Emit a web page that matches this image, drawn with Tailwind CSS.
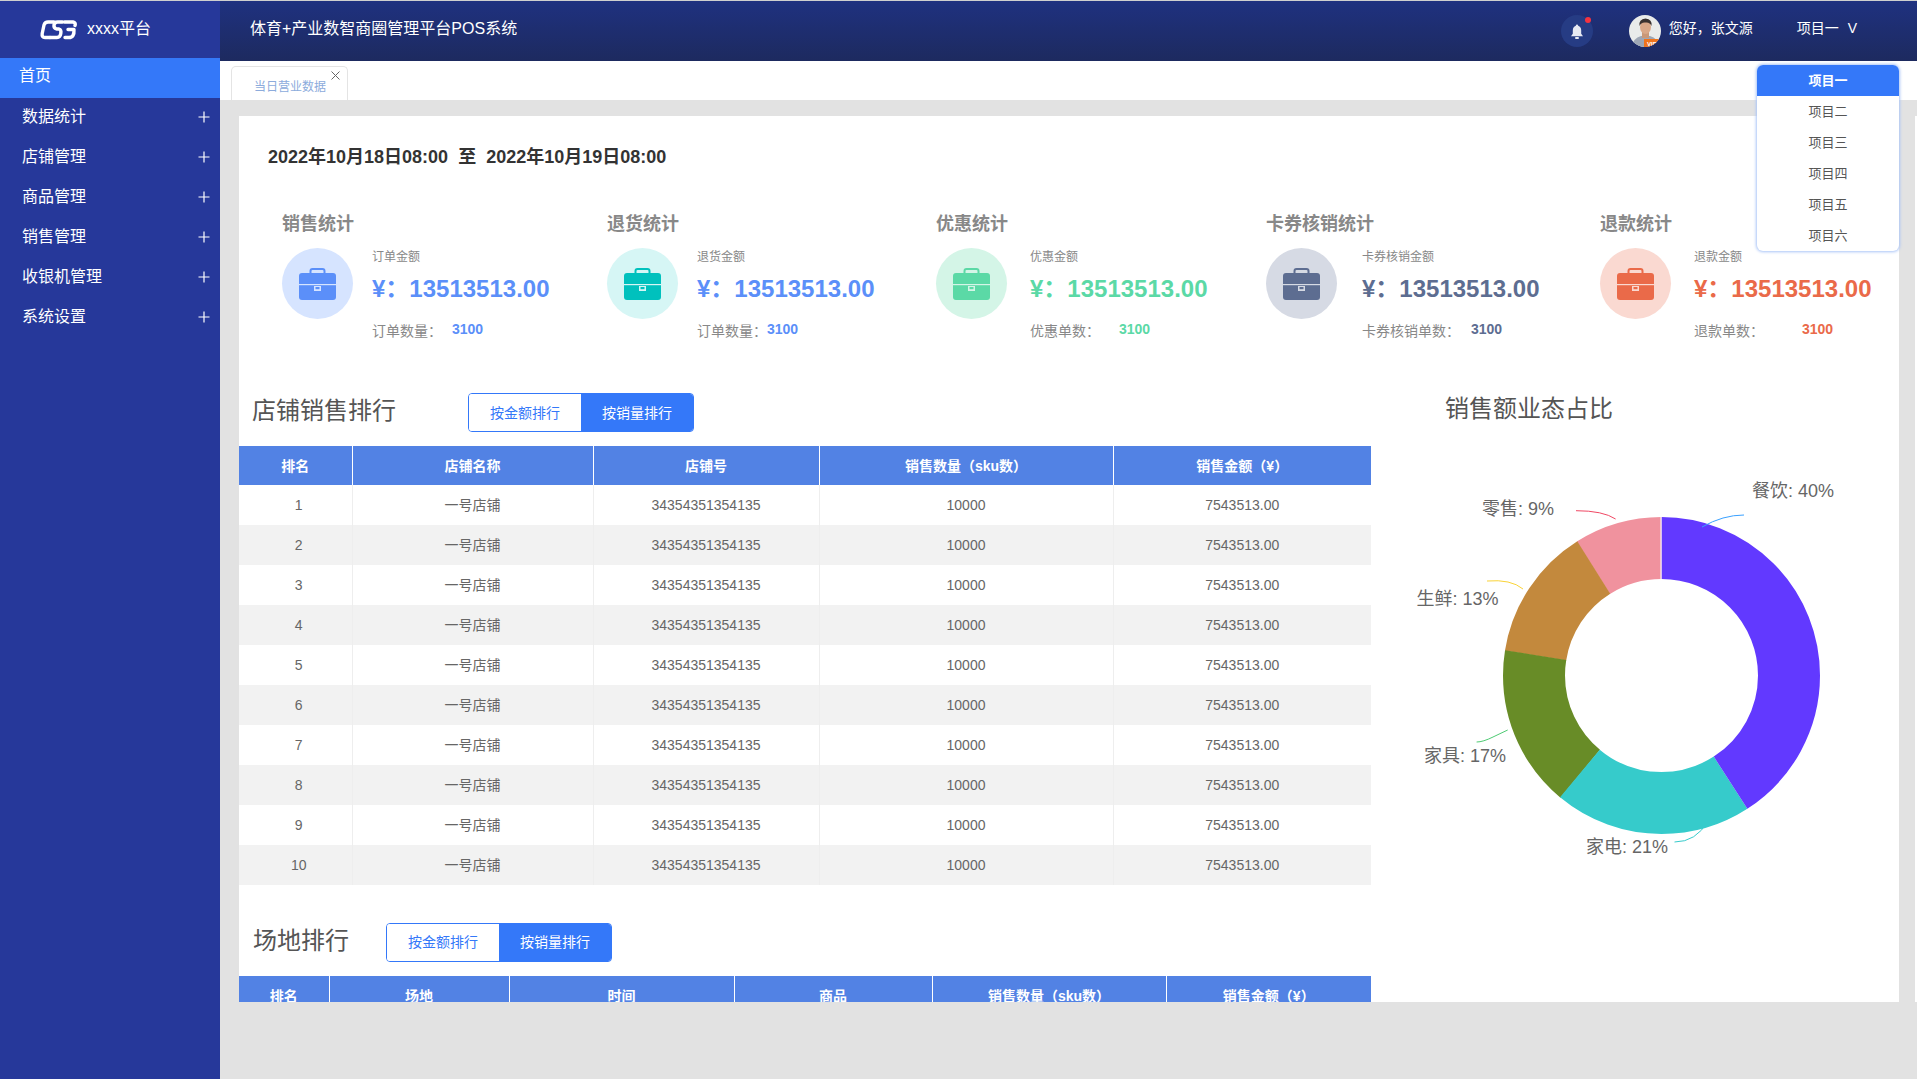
<!DOCTYPE html>
<html lang="zh">
<head>
    <meta charset="UTF-8">
    <title>体育+产业数智商圈管理平台POS系统</title>
    <script src="https://cdn.jsdelivr.net/npm/@tailwindcss/browser@4"></script>
</head>
<body class="font-['Liberation_Sans','Noto_Sans_CJK_SC',sans-serif] overflow-hidden">
<div class="relative flex flex-col h-screen border-t border-[#cfcfcf] bg-[#e2e2e2]">
    <div class="flex flex-1 min-h-0">
        <!-- 侧边栏 -->
        <aside class="w-[220px] shrink-0 bg-[#26389a] text-white">
            <div class="h-[57px] flex items-center pl-[40px] gap-[10px]">
                <svg width="37" height="20" viewBox="0 0 37 20" fill="none" stroke="white" stroke-width="3.4" stroke-linecap="round" stroke-linejoin="round">
                    <path d="M14 2 H8 Q5 2 4 5 L2.2 13.5 Q1.6 17.5 5 17.5 H10"/>
                    <path d="M22.5 2 H17.5 Q14.5 2 14 5 Q13.6 8 16.5 9 H19 Q21.5 9.8 20.8 13.5 Q20.2 17.5 17 17.5 H10"/>
                    <path d="M24.5 2 H33 Q36 2.5 35 5.5"/>
                    <path d="M28 9.5 H34 Q34.5 17.5 29 17.5 H25"/>
                </svg>
                <span class="text-[16px] pb-[2px]">xxxx平台</span>
            </div>
            <div class="h-[40px] bg-[#3478f9] flex items-center pl-[19px] pb-[4px] text-[16px]">首页</div>
            <nav class="text-[16px]">
                <div class="h-[40px] flex items-center justify-between pl-[22px] pr-[10px] pb-[3px]"><span>数据统计</span><svg width="12" height="12" viewBox="0 0 12 12" stroke="white" stroke-width="1.2"><path d="M6 0.5V11.5M0.5 6H11.5"/></svg></div>
                <div class="h-[40px] flex items-center justify-between pl-[22px] pr-[10px] pb-[3px]"><span>店铺管理</span><svg width="12" height="12" viewBox="0 0 12 12" stroke="white" stroke-width="1.2"><path d="M6 0.5V11.5M0.5 6H11.5"/></svg></div>
                <div class="h-[40px] flex items-center justify-between pl-[22px] pr-[10px] pb-[3px]"><span>商品管理</span><svg width="12" height="12" viewBox="0 0 12 12" stroke="white" stroke-width="1.2"><path d="M6 0.5V11.5M0.5 6H11.5"/></svg></div>
                <div class="h-[40px] flex items-center justify-between pl-[22px] pr-[10px] pb-[3px]"><span>销售管理</span><svg width="12" height="12" viewBox="0 0 12 12" stroke="white" stroke-width="1.2"><path d="M6 0.5V11.5M0.5 6H11.5"/></svg></div>
                <div class="h-[40px] flex items-center justify-between pl-[22px] pr-[10px] pb-[3px]"><span>收银机管理</span><svg width="12" height="12" viewBox="0 0 12 12" stroke="white" stroke-width="1.2"><path d="M6 0.5V11.5M0.5 6H11.5"/></svg></div>
                <div class="h-[40px] flex items-center justify-between pl-[22px] pr-[10px] pb-[3px]"><span>系统设置</span><svg width="12" height="12" viewBox="0 0 12 12" stroke="white" stroke-width="1.2"><path d="M6 0.5V11.5M0.5 6H11.5"/></svg></div>
            </nav>
        </aside>

        <div class="flex-1 min-w-0 flex flex-col">
            <!-- 顶部栏 -->
            <header class="h-[60px] shrink-0 bg-gradient-to-b from-[#1f3180] to-[#1d2a5f] flex items-center text-white pl-[30px] pb-[6px]">
                <span class="text-[16px] pt-[2px]">体育+产业数智商圈管理平台POS系统</span>
                <div class="relative ml-auto mt-[6px] w-[32px] h-[32px] rounded-full bg-[#263c84] flex items-center justify-center">
                    <svg width="12" height="15" viewBox="0 0 12 15" fill="#e6e9f2"><path d="M6 0.5 Q7 0.5 7.2 1.8 Q10.2 2.8 10.2 6.5 V9.8 L12 12.2 H0 L1.8 9.8 V6.5 Q1.8 2.8 4.8 1.8 Q5 0.5 6 0.5Z"/><rect x="4" y="13" width="4" height="2" rx="1"/></svg>
                    <span class="absolute right-[2px] top-[2px] w-[6px] h-[6px] rounded-full bg-[#f5333f]"></span>
                </div>
                <svg class="ml-[36px] mt-[6px]" width="32" height="32" viewBox="0 0 32 32">
                    <clipPath id="av"><circle cx="16" cy="16" r="16"/></clipPath>
                    <g clip-path="url(#av)">
                        <rect width="32" height="32" fill="#e9ebea"/>
                        <path d="M3 32 Q4 23 12 21 H21 Q29 23 30 32Z" fill="#9ea7b5"/>
                        <rect x="13" y="17" width="7" height="6" fill="#c99878"/>
                        <ellipse cx="16.5" cy="12" rx="5.5" ry="7" fill="#d9a888"/>
                        <path d="M10.5 11 Q9.5 4 16.5 3.5 Q23.5 4 22.5 11 Q21 7 16.5 7.5 Q12 7 10.5 11Z" fill="#3a3230"/>
                        <rect x="15" y="24" width="17" height="8" fill="#f0741c"/>
                        <text x="18" y="30.5" font-size="6" font-weight="700" fill="#fff">VIP</text>
                    </g>
                </svg>
                <span class="ml-[8px] text-[14px]">您好，张文源</span>
                <span class="ml-[44px] mr-[60px] text-[14px] flex">项目一<span class="ml-[9px]">V</span></span>
            </header>

            <!-- 标签栏 -->
            <div class="h-[39px] shrink-0 bg-white pl-[11px] pt-[5px]">
                <div class="relative w-[117px] h-[34px] border border-b-0 border-[#e4e4e4] rounded-t-[5px] text-[12px] text-[#8cabdc] pl-[22px] pt-[11px] leading-[18px]">
                    当日营业数据
                    <svg class="absolute right-[7px] top-[4px]" width="9" height="9" viewBox="0 0 9 9" stroke="#666" stroke-width="1"><path d="M0.5 0.5L8.5 8.5M8.5 0.5L0.5 8.5"/></svg>
                </div>
            </div>

            <!-- 内容区 -->
            <div class="flex-1 min-h-0 flex pl-[19px] pt-[16px]">
                <main class="w-[1660px] h-[886px] shrink-0 bg-white overflow-hidden">
                    <div class="h-[82px] flex items-center pl-[29px] text-[18px] font-bold text-[#333]">
                        <span>2022年10月18日08:00</span><span class="mx-[10px]">至</span><span>2022年10月19日08:00</span>
                    </div>

                    <!-- 统计 -->
                    <div class="h-[187px] flex pl-[43px] pt-[13px]">
                        <section class="w-[325px]">
                            <h3 class="text-[18px] leading-[26px] font-bold text-[#888]">销售统计</h3>
                            <div class="mt-[11px] flex">
                                <div class="w-[71px] h-[71px] shrink-0 rounded-full bg-[#d6e4ff] flex items-center justify-center">
                                    <svg width="37" height="32" viewBox="0 0 37 32" class="text-[#5b8ff9]"><rect x="11.5" y="1" width="14" height="6" rx="2" fill="none" stroke="currentColor" stroke-width="2"/><rect y="5" width="37" height="27" rx="3" fill="currentColor"/><rect y="16" width="37" height="1.2" fill="#d6e4ff"/><rect x="15" y="18" width="7" height="5" fill="#d6e4ff"/><rect x="16.5" y="19" width="4" height="2.2" fill="currentColor"/></svg>
                                </div>
                                <div class="ml-[19px] text-[#888]">
                                    <div class="text-[12px] leading-[18px]">订单金额</div>
                                    <div class="mt-[6px] h-[34px] leading-[34px] text-[24px] font-bold whitespace-nowrap text-[#5b8ff9]">¥：13513513.00</div>
                                    <div class="mt-[15px] flex items-center h-[20px] text-[14px]"><span class="w-[80px]">订单数量：</span><span class="-mt-[4px] font-bold text-[#5b8ff9]">3100</span></div>
                                </div>
                            </div>
                        </section>
                        <section class="w-[329px]">
                            <h3 class="text-[18px] leading-[26px] font-bold text-[#888]">退货统计</h3>
                            <div class="mt-[11px] flex">
                                <div class="w-[71px] h-[71px] shrink-0 rounded-full bg-[#d6f6f5] flex items-center justify-center">
                                    <svg width="37" height="32" viewBox="0 0 37 32" class="text-[#00c1bd]"><rect x="11.5" y="1" width="14" height="6" rx="2" fill="none" stroke="currentColor" stroke-width="2"/><rect y="5" width="37" height="27" rx="3" fill="currentColor"/><rect y="16" width="37" height="1.2" fill="#d6f6f5"/><rect x="15" y="18" width="7" height="5" fill="#d6f6f5"/><rect x="16.5" y="19" width="4" height="2.2" fill="currentColor"/></svg>
                                </div>
                                <div class="ml-[19px] text-[#888]">
                                    <div class="text-[12px] leading-[18px]">退货金额</div>
                                    <div class="mt-[6px] h-[34px] leading-[34px] text-[24px] font-bold whitespace-nowrap text-[#5b8ff9]">¥：13513513.00</div>
                                    <div class="mt-[15px] flex items-center h-[20px] text-[14px]"><span class="w-[70px]">订单数量：</span><span class="-mt-[4px] font-bold text-[#5b8ff9]">3100</span></div>
                                </div>
                            </div>
                        </section>
                        <section class="w-[330px]">
                            <h3 class="text-[18px] leading-[26px] font-bold text-[#888]">优惠统计</h3>
                            <div class="mt-[11px] flex">
                                <div class="w-[71px] h-[71px] shrink-0 rounded-full bg-[#d4f5e7] flex items-center justify-center">
                                    <svg width="37" height="32" viewBox="0 0 37 32" class="text-[#5bd9a6]"><rect x="11.5" y="1" width="14" height="6" rx="2" fill="none" stroke="currentColor" stroke-width="2"/><rect y="5" width="37" height="27" rx="3" fill="currentColor"/><rect y="16" width="37" height="1.2" fill="#d4f5e7"/><rect x="15" y="18" width="7" height="5" fill="#d4f5e7"/><rect x="16.5" y="19" width="4" height="2.2" fill="currentColor"/></svg>
                                </div>
                                <div class="ml-[23px] text-[#888]">
                                    <div class="text-[12px] leading-[18px]">优惠金额</div>
                                    <div class="mt-[6px] h-[34px] leading-[34px] text-[24px] font-bold whitespace-nowrap text-[#5bd9a6]">¥：13513513.00</div>
                                    <div class="mt-[15px] flex items-center h-[20px] text-[14px]"><span class="w-[89px]">优惠单数：</span><span class="-mt-[4px] font-bold text-[#5bd9a6]">3100</span></div>
                                </div>
                            </div>
                        </section>
                        <section class="w-[334px]">
                            <h3 class="text-[18px] leading-[26px] font-bold text-[#888]">卡券核销统计</h3>
                            <div class="mt-[11px] flex">
                                <div class="w-[71px] h-[71px] shrink-0 rounded-full bg-[#d6dae4] flex items-center justify-center">
                                    <svg width="37" height="32" viewBox="0 0 37 32" class="text-[#5d6d91]"><rect x="11.5" y="1" width="14" height="6" rx="2" fill="none" stroke="currentColor" stroke-width="2"/><rect y="5" width="37" height="27" rx="3" fill="currentColor"/><rect y="16" width="37" height="1.2" fill="#d6dae4"/><rect x="15" y="18" width="7" height="5" fill="#d6dae4"/><rect x="16.5" y="19" width="4" height="2.2" fill="currentColor"/></svg>
                                </div>
                                <div class="ml-[25px] text-[#888]">
                                    <div class="text-[12px] leading-[18px]">卡券核销金额</div>
                                    <div class="mt-[6px] h-[34px] leading-[34px] text-[24px] font-bold whitespace-nowrap text-[#5d6d91]">¥：13513513.00</div>
                                    <div class="mt-[15px] flex items-center h-[20px] text-[14px]"><span class="w-[109px]">卡券核销单数：</span><span class="-mt-[4px] font-bold text-[#5d6d91]">3100</span></div>
                                </div>
                            </div>
                        </section>
                        <section class="flex-1">
                            <h3 class="text-[18px] leading-[26px] font-bold text-[#888]">退款统计</h3>
                            <div class="mt-[11px] flex">
                                <div class="w-[71px] h-[71px] shrink-0 rounded-full bg-[#fad9d1] flex items-center justify-center">
                                    <svg width="37" height="32" viewBox="0 0 37 32" class="text-[#ea6a49]"><rect x="11.5" y="1" width="14" height="6" rx="2" fill="none" stroke="currentColor" stroke-width="2"/><rect y="5" width="37" height="27" rx="3" fill="currentColor"/><rect y="16" width="37" height="1.2" fill="#fad9d1"/><rect x="15" y="18" width="7" height="5" fill="#fad9d1"/><rect x="16.5" y="19" width="4" height="2.2" fill="currentColor"/></svg>
                                </div>
                                <div class="ml-[23px] text-[#888]">
                                    <div class="text-[12px] leading-[18px]">退款金额</div>
                                    <div class="mt-[6px] h-[34px] leading-[34px] text-[24px] font-bold whitespace-nowrap text-[#ea6a49]">¥：13513513.00</div>
                                    <div class="mt-[15px] flex items-center h-[20px] text-[14px]"><span class="w-[108px]">退款单数：</span><span class="-mt-[4px] font-bold text-[#ea6a49]">3100</span></div>
                                </div>
                            </div>
                        </section>
                    </div>

                    <div class="flex">
                        <div class="w-[1132px] shrink-0">
                            <!-- 店铺销售排行 -->
                            <div class="h-[61px] flex pt-[8px]">
                                <h2 class="w-[229px] pl-[13px] text-[24px] leading-[36px] text-[#555]">店铺销售排行</h2>
                                <div class="flex w-[226px] h-[39px] rounded-[4px] border border-[#3478f9] overflow-hidden text-[14px]">
                                    <span class="w-[112px] flex items-center justify-center pt-[2px] text-[#3478f9] bg-white">按金额排行</span>
                                    <span class="flex-1 flex items-center justify-center pt-[2px] text-white bg-[#3478f9]">按销量排行</span>
                                </div>
                            </div>
                            <table class="w-[1132px] table-fixed border-collapse text-[14px] text-[#666] text-center">
                                <thead>
                                    <tr class="h-[39px] bg-[#5282e4] text-white font-bold [&_th]:pt-[2px]">
                                        <th class="w-[113px] border-r border-white">排名</th>
                                        <th class="w-[241px] border-r border-white">店铺名称</th>
                                        <th class="w-[226px] border-r border-white">店铺号</th>
                                        <th class="w-[294px] border-r border-white">销售数量（sku数）</th>
                                        <th>销售金额（¥）</th>
                                    </tr>
                                </thead>
                                <tbody class="[&_td]:border-r [&_td]:border-[#eeeeee] [&_td:last-child]:border-r-0 [&_td]:pt-[1px] [&_td:first-child]:pl-[7px]">
                                    <tr class="h-[40px]"><td>1</td><td>一号店铺</td><td>34354351354135</td><td>10000</td><td>7543513.00</td></tr>
                                    <tr class="h-[40px] bg-[#f2f2f2]"><td>2</td><td>一号店铺</td><td>34354351354135</td><td>10000</td><td>7543513.00</td></tr>
                                    <tr class="h-[40px]"><td>3</td><td>一号店铺</td><td>34354351354135</td><td>10000</td><td>7543513.00</td></tr>
                                    <tr class="h-[40px] bg-[#f2f2f2]"><td>4</td><td>一号店铺</td><td>34354351354135</td><td>10000</td><td>7543513.00</td></tr>
                                    <tr class="h-[40px]"><td>5</td><td>一号店铺</td><td>34354351354135</td><td>10000</td><td>7543513.00</td></tr>
                                    <tr class="h-[40px] bg-[#f2f2f2]"><td>6</td><td>一号店铺</td><td>34354351354135</td><td>10000</td><td>7543513.00</td></tr>
                                    <tr class="h-[40px]"><td>7</td><td>一号店铺</td><td>34354351354135</td><td>10000</td><td>7543513.00</td></tr>
                                    <tr class="h-[40px] bg-[#f2f2f2]"><td>8</td><td>一号店铺</td><td>34354351354135</td><td>10000</td><td>7543513.00</td></tr>
                                    <tr class="h-[40px]"><td>9</td><td>一号店铺</td><td>34354351354135</td><td>10000</td><td>7543513.00</td></tr>
                                    <tr class="h-[40px] bg-[#f2f2f2]"><td>10</td><td>一号店铺</td><td>34354351354135</td><td>10000</td><td>7543513.00</td></tr>
                                </tbody>
                            </table>

                            <!-- 场地排行 -->
                            <div class="h-[91px] flex pt-[38px]">
                                <h2 class="w-[147px] pl-[14px] text-[24px] leading-[36px] text-[#555]">场地排行</h2>
                                <div class="flex w-[226px] h-[39px] rounded-[4px] border border-[#3478f9] overflow-hidden text-[14px]">
                                    <span class="w-[112px] flex items-center justify-center text-[#3478f9] bg-white">按金额排行</span>
                                    <span class="flex-1 flex items-center justify-center text-white bg-[#3478f9]">按销量排行</span>
                                </div>
                            </div>
                            <table class="w-[1132px] table-fixed border-collapse text-[14px] text-center">
                                <thead>
                                    <tr class="h-[39px] bg-[#5282e4] text-white font-bold [&_th]:pt-[2px]">
                                        <th class="w-[90px] border-r border-white">排名</th>
                                        <th class="w-[180px] border-r border-white">场地</th>
                                        <th class="w-[225px] border-r border-white">时间</th>
                                        <th class="w-[198px] border-r border-white">商品</th>
                                        <th class="w-[234px] border-r border-white">销售数量（sku数）</th>
                                        <th>销售金额（¥）</th>
                                    </tr>
                                </thead>
                            </table>
                        </div>

                        <!-- 环形图 -->
                        <div class="flex-1">
                            <h2 class="h-[46px] pl-[74px] text-[24px] leading-[48px] text-[#555]">销售额业态占比</h2>
                            <svg width="528" height="455" viewBox="0 0 528 455" fill="none">
                                <g stroke-width="62" transform="rotate(-90 290.5 244.5)">
                                    <circle cx="290.5" cy="244.5" r="127.5" pathLength="360" stroke="#f0929e" stroke-dasharray="32.3 360" stroke-dashoffset="-327.7"/>
                                    <circle cx="290.5" cy="244.5" r="127.5" pathLength="360" stroke="#c3893d" stroke-dasharray="48.9 360" stroke-dashoffset="-279"/>
                                    <circle cx="290.5" cy="244.5" r="127.5" pathLength="360" stroke="#688c27" stroke-dasharray="59.6 360" stroke-dashoffset="-219.6"/>
                                    <circle cx="290.5" cy="244.5" r="127.5" pathLength="360" stroke="#36cbcb" stroke-dasharray="72.6 360" stroke-dashoffset="-147.2"/>
                                    <circle cx="290.5" cy="244.5" r="127.5" pathLength="360" stroke="#6239ff" stroke-dasharray="147.2 360"/>
                                </g>
                                <path d="M290 86V148" stroke="#fff" stroke-width="1"/>
                                <path d="M331 96Q352 84 373 84" stroke="#3aa1ff"/>
                                <path d="M244.6 88Q232 79.7 205 79.7" stroke="#f04864"/>
                                <path d="M152 158Q140 148 116 150" stroke="#fad337"/>
                                <path d="M136.7 299L122 306Q112 311 105.6 311" stroke="#4ecb73"/>
                                <path d="M337 390Q325 411 303.5 411" stroke="#36cbcb"/>
                                <g fill="#666" font-size="18" dominant-baseline="central">
                                    <text x="381" y="60">餐饮: 40%</text>
                                    <text x="111" y="78">零售: 9%</text>
                                    <text x="45.6" y="168">生鲜: 13%</text>
                                    <text x="53" y="325">家具: 17%</text>
                                    <text x="215" y="416">家电: 21%</text>
                                </g>
                            </svg>
                        </div>
                    </div>
                </main>
                <div class="ml-[16px] w-[2px] h-[886px] bg-white"></div>
            </div>
        </div>
    </div>

    <!-- 项目下拉菜单 -->
    <div class="absolute left-[1757px] top-[64px] w-[142px] rounded-[6px] bg-white overflow-hidden shadow-[0_0_3px_1px_#a9c4f7] text-[13px] text-[#555] text-center">
        <div class="h-[31px] leading-[31px] bg-[#3478f9] text-white font-bold">项目一</div>
        <div class="h-[31px] leading-[31px]">项目二</div>
        <div class="h-[31px] leading-[31px]">项目三</div>
        <div class="h-[31px] leading-[31px]">项目四</div>
        <div class="h-[31px] leading-[31px]">项目五</div>
        <div class="h-[31px] leading-[31px]">项目六</div>
    </div>
</div>
</body>
</html>
